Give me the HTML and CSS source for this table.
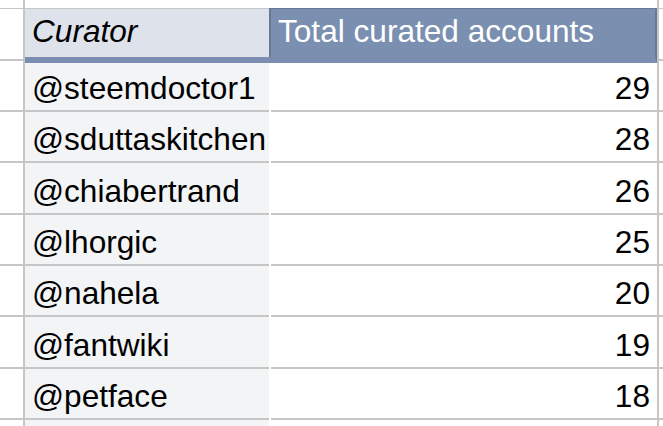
FILE: index.html
```html
<!DOCTYPE html>
<html>
<head>
<meta charset="utf-8">
<link rel="stylesheet" href="styles.css">
</head>
<body>
<div class="sheet">
  <div class="row top"><div class="c a"></div><div class="c b"></div><div class="c s"></div><div class="c n"></div><div class="c d"></div></div>
  <div class="row head"><div class="c a"></div><div class="c b"><span class="it">Curator</span></div><div class="c s"></div><div class="c n">Total curated accounts</div><div class="c d"></div></div>
  <div class="row data first"><div class="c a"></div><div class="c b">@steemdoctor1</div><div class="c s"></div><div class="c n">29</div><div class="c d"></div></div>
  <div class="row data"><div class="c a"></div><div class="c b">@sduttaskitchen</div><div class="c s"></div><div class="c n">28</div><div class="c d"></div></div>
  <div class="row data"><div class="c a"></div><div class="c b">@chiabertrand</div><div class="c s"></div><div class="c n">26</div><div class="c d"></div></div>
  <div class="row data"><div class="c a"></div><div class="c b">@lhorgic</div><div class="c s"></div><div class="c n">25</div><div class="c d"></div></div>
  <div class="row data"><div class="c a"></div><div class="c b">@nahela</div><div class="c s"></div><div class="c n">20</div><div class="c d"></div></div>
  <div class="row data"><div class="c a"></div><div class="c b">@fantwiki</div><div class="c s"></div><div class="c n">19</div><div class="c d"></div></div>
  <div class="row data"><div class="c a"></div><div class="c b">@petface</div><div class="c s"></div><div class="c n">18</div><div class="c d"></div></div>
  <div class="row data"><div class="c a"></div><div class="c b"></div><div class="c s"></div><div class="c n"></div><div class="c d"></div></div>
</div>
</body>
</html>
```
FILE: styles.css
```css
html, body {
  margin: 0;
  padding: 0;
  background: #ffffff;
  overflow: hidden;
}

.sheet {
  font-family: "Liberation Sans", Arial, sans-serif;
  font-size: 31.6px;
  line-height: 34px;
  color: #000000;
  width: 663px;
  height: 426px;
  overflow: hidden;
}

.row {
  display: grid;
  grid-template-columns: 25px 244px 2px 386px 1fr;
}

.c {
  box-sizing: border-box;
  min-width: 0;
}

.a {
  border-right: 2px solid #c6c6c6;
}

.d {
  border-left: 2px solid #c6c6c6;
}

/* strip above the header */
.top .c {
  height: 9px;
  border-bottom: 1px solid #c6c6c6;
}

.top .s,
.top .n {
  border-bottom-color: #687896;
}

/* header row */
.head .c {
  height: 54px;
}

.head .a,
.head .d {
  background: linear-gradient(to bottom, transparent 50px, #c6c6c6 50px, #c6c6c6 52px, transparent 52px);
}

.head .b,
.head .s,
.head .n {
  border-bottom: 6px solid #7b8db0;
  display: flex;
  align-items: flex-end;
  padding: 0 7px 9px;
  white-space: nowrap;
  overflow: hidden;
}

.head .b {
  background: #dee2eb;
}

.head .s {
  background: #66779a;
  padding: 0;
}

.head .n {
  background: #7b8fb1;
  border-right: 2px solid #687896;
  color: #ffffff;
}

.it {
  font-style: italic;
}

/* data rows */
.data .c {
  height: 51.33px;
  border-bottom: 2px solid #c6c6c6;
}

.data.first .c {
  height: 49px;
}

.data .s {
  border-bottom: none;
}

.data .b {
  background: #f3f4f6;
  display: flex;
  align-items: flex-end;
  padding: 0 7px 5px;
  white-space: nowrap;
  overflow: hidden;
}

.data .n {
  display: flex;
  align-items: flex-end;
  justify-content: flex-end;
  padding: 0 7px 5px;
}
```
